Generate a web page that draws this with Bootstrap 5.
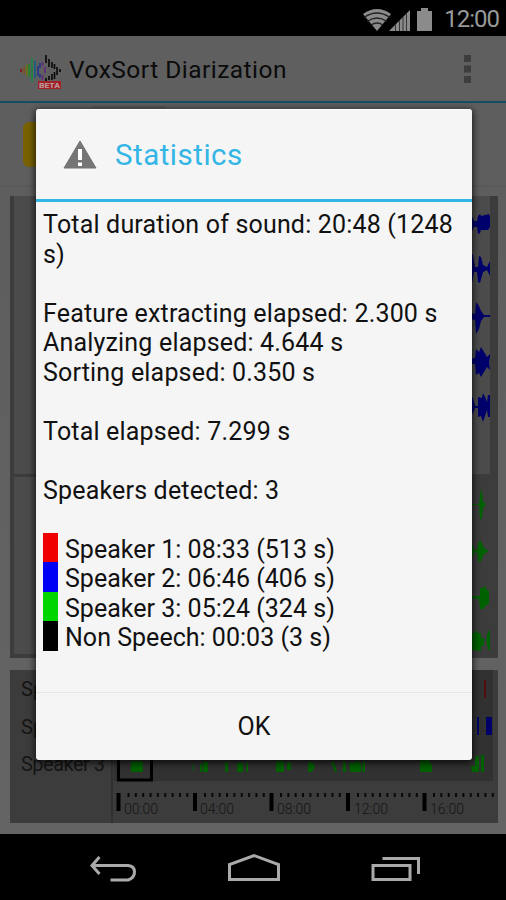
<!DOCTYPE html>
<html lang="en">
<head>
<meta charset="utf-8">
<meta name="viewport" content="width=device-width, initial-scale=1">
<title>VoxSort Diarization</title>
<link href="https://cdn.jsdelivr.net/npm/bootstrap@5.3.0/dist/css/bootstrap.min.css" rel="stylesheet">
<style>
body{font-family:Roboto,"Liberation Sans",sans-serif;background:#000}
.phone{width:506px;height:900px}
.status{height:36px;background:#000;color:#999;font-size:24px;line-height:36px;padding:1px 8px 0 0}
.clock{letter-spacing:-1px;margin-left:9px;margin-right:-1px}
.appbar{height:67px;background:#5f5f5f;border-bottom:2px solid #144e66;padding:0 0 0 18px;color:#0b0b0b}
.appname{font-size:24.5px;line-height:66px;letter-spacing:.47px;margin-left:6px;padding-top:3px}
.stage{height:731px;background:linear-gradient(#5d5d5d,#646464)}
.soft-keys{height:66px;background:#000}
.dialog-box{left:36px;top:109px;width:436px;height:651px;background:#f5f5f5;border-radius:3px;box-shadow:0 2px 7px 1px rgba(0,0,0,.75);border-top:1px solid #fff}
.dialog-head{height:92px;border-bottom:3px solid #33b5e5;padding:0 0 0 27px}
.dialog-title{font-size:29.5px;color:#33b5e5;line-height:92px;margin-left:18px;letter-spacing:.5px}
.stats{font-size:25px;line-height:29.5px;height:490px;padding:8px 7px 0;color:#111;letter-spacing:.18px}
.speaker-line{letter-spacing:.02px}
.swatch{width:15px;height:29.5px;margin-right:7px;position:relative;top:-2px}
.ok-button{border-top:1px solid #e6e6e6;font-size:25px;color:#111;height:69px}
</style>
</head>
<body>
<main class="phone position-relative overflow-hidden">
  <div class="status d-flex justify-content-end align-items-center">
    <svg width="74" height="26" viewBox="0 0 74 26" fill="#8b8b8b">
      <path d="M2 8Q16-2 30 8L16 25Z"/>
      <path d="M3 11.5Q16 2.5 29 11.5M6 15.5Q16 8.5 26 15.5M10 19Q16 15 22 19" fill="none" stroke="#222" stroke-width="1.3"/>
      <path d="M28 25L49 4V25Z"/><path d="M34.5 18v7M38.500 14v11M42 11v14M45.500 8v17" stroke="#333" stroke-width="1"/>
      <path d="M56 5h4V2h7v3h4v20H56Z"/>
    </svg>
    <span class="clock">12:00</span>
  </div>
  <header class="appbar d-flex align-items-center">
    <svg width="45" height="46" viewBox="0 0 45 46" fill="none" stroke-width="1.6">
      <path d="M3 23v3" stroke="#811014"/><path d="M6 21v7" stroke="#8b4a13"/><path d="M8.700 18.500v11" stroke="#6d7413"/><path d="M11 18v13" stroke="#28802c"/><path d="M14 12v24" stroke="#188642"/><path d="M17 15v17" stroke="#135f86"/><path d="M20 20v10M22 17v5M22 28v4" stroke="#24348a"/>
      <path d="M24.500 16v4M24.500 29v5M27 21v6" stroke="#652a83"/>
      <path d="M28 9v8M31 13v8M34 16v6M36.500 18v5M39 21v8M42 23v3M36.500 26v7M34 28v6M31 30v4M28 32v3" stroke="#080808"/>
      <path d="M20 35h23v8H20Z" fill="#a42026"/><text x="21" y="42" font-size="8" font-weight="700" fill="#b9a0a0" stroke="none" textLength="21" lengthAdjust="spacingAndGlyphs">BETA</text>
    </svg>
    <h1 class="appname mb-0 fw-normal">VoxSort Diarization</h1>
    <svg class="ms-auto" width="42" height="30" viewBox="0 0 42 30" fill="#3d3d3d"><path d="M0 1h7v7H0zM0 11.500h7v7H0zM0 22h7v7H0z"/></svg>
  </header>
  <section class="stage">
    <svg width="506" height="731" viewBox="0 103 506 731" font-family="Roboto, sans-serif">
      <path d="M0 103H506V186H0Z" fill="#5e5e5e"/><path d="M0 186H506" stroke="#555"/>
      <path d="M92 107h74" stroke="#4c4c4c"/>
      <rect x="23" y="122" width="60" height="45" rx="6" fill="#776100"/>
      <path d="M10 196H498V658H10Z" fill="#3c3c3c"/><path d="M14 196H490V474H14ZM14 477H60V654H14Z" fill="#4b4b4b"/>
      <path d="M14 658H498V670H14Z" fill="#626262"/>
      <path d="M10 670H498V823H10Z" fill="#3c3c3c"/><path d="M114 670H493V781H114Z" fill="#313131"/><path d="M112 670V823" stroke="#303030" stroke-width="2"/>
      <g fill="#00006c">
        <path d="M470 216l3 2 1 3h3l1-5 2-2 1 2 8-2 1 3v10l-2 3-7 0-1 3-2 1-1-7h-3l-2 4h-2Z"/>
        <path d="M470 252l3 3 2 12h3l1-11 2 1 2 8 4 2 3-6v15l-3-6-4 2-3 11-2-1-1-10h-3l-2 11-2 1Z"/>
        <path d="M470 313l5 1 1-12 3 4 2 5 3 4 6 0v2h-6l-3 4-2 8-3 5-1-14-5-1Z"/>
        <path d="M470 359l5-1 1-9 3 3 2-5 3 5 3 5 3-3v4l-1 4 1 8-3-3-3 5-3 5-2-4-3 2-1-11h-5Z"/>
        <path d="M470 394l3 4 2 8h3v-9l4 1 1-5 2 4 2 5 1-7h2v22h-2l-1-7-2 6-2 6-2-6-3 1v-9h-3l-2 5-3 3Z"/>
      </g>
      <g fill="#006100">
        <path d="M470 504h9l2-15 1 2 1 11 3 2-3 4-1 10-2 2-1-15h-9Z"/>
        <path d="M470 542l3 3 1 5h3l2-9 2 0 3 7 5 3-5 3-4 9-2-3-1-8-3 1-2 6h-2Z"/>
        <path d="M470 596h10v-8l3 0 2-3 1 4 3 2v13l-4 2-1 3-4 0-1-10-9-1Z"/>
        <path d="M470 633l4 0 1-3 3 3 3 0v5h3v8h-3v5l-8-1-3 1ZM486 640l2-9h2v19h-2Z"/>
        <path d="M131 761h12v11h-12ZM193 764h1v7h-1ZM200 764h2v8h-2ZM203 762h5v10h-5ZM225 762h3v10h-3ZM237 763h6v9h-6ZM246 762h2v10h-2ZM276 761h8v11h-8ZM287 762h4v8h-4ZM308 762h4l3 4-3 6h-4ZM331 762h3l3 10h-2ZM343 762h3v10h-3ZM349 763l7-1 1-2 4 4v8h-11ZM362 762h3v10h-3ZM420 760h10v4h2v8h-12ZM471 766h4v-9l4-2v17h-7ZM481 755h3v17h-3Z"/>
      </g>
      <path d="M485 680V698" stroke="#620000" stroke-width="1.500"/>
      <path d="M477 717h2v18h-2ZM486 717h6v18h-6Z" fill="#000068"/>
      <g font-size="20" fill="#151515"><text x="21" y="696">Speaker 1</text><text x="21" y="734">Speaker 2</text><text x="21" y="771" textLength="84">Speaker 3</text></g>
      <rect x="118.500" y="745" width="33" height="35" fill="none" stroke="#000" stroke-width="3"/>
      <path d="M127.500 795H194M204 795H270M280 795H347M357 795H423M433 795H494" stroke="#090909" stroke-width="4" stroke-dasharray="2 5.350"/>
      <path d="M118.500 793V811M195 793V811M271.500 793V811M348 793V811M424.500 793V811" stroke="#000" stroke-width="4"/>
      <g font-size="14" font-weight="300" fill="#151515"><text x="124" y="814" textLength="34">00:00</text><text x="200" y="814" textLength="34">04:00</text><text x="277" y="814" textLength="34">08:00</text><text x="354" y="814" textLength="34">12:00</text><text x="430" y="814" textLength="34">16:00</text></g>
    </svg>
  </section>
  <nav class="soft-keys d-flex">
    <svg width="506" height="66" viewBox="0 834 506 66" fill="none" stroke="#aaa" stroke-width="3">
      <path d="M99.500 857L92 865.500L99.500 874M92 865.500H128Q134.500 866 134.500 872T128 880H110.500"/>
      <path d="M229.500 879.500V864.500L254 855.500L278.500 864.500V879.500Z"/>
      <path d="M373 865.500H410V879.500H373ZM382.500 858.500H418.500V874"/>
    </svg>
  </nav>
  <section class="dialog-box position-absolute" role="dialog">
    <div class="dialog-head d-flex align-items-center">
      <svg width="34" height="30" viewBox="0 0 34 30"><path d="M17 1L33 28H1Z" fill="#757575" stroke="#757575" stroke-linejoin="round"/><path d="M15 9h4v11h-4ZM15 22.500h4v3.500h-4Z" fill="#fff"/></svg>
      <h2 class="dialog-title mb-0 fw-normal">Statistics</h2>
    </div>
    <div class="stats">
      <div>Total duration of sound: 20:48 (1248 s)</div><br>
      <div>Feature extracting elapsed: 2.300 s</div>
      <div>Analyzing elapsed: 4.644 s</div>
      <div>Sorting elapsed: 0.350 s</div><br>
      <div>Total elapsed: 7.299 s</div><br>
      <div>Speakers detected: 3</div><br>
      <div class="speaker-line d-flex"><span class="swatch" style="background:#f00000"></span>Speaker 1: 08:33 (513 s)</div>
      <div class="speaker-line d-flex"><span class="swatch" style="background:#0000f5"></span>Speaker 2: 06:46 (406 s)</div>
      <div class="speaker-line d-flex"><span class="swatch" style="background:#00d500"></span>Speaker 3: 05:24 (324 s)</div>
      <div class="speaker-line d-flex"><span class="swatch" style="background:#000"></span>Non Speech: 00:03 (3 s)</div>
    </div>
    <div class="ok-button d-flex justify-content-center align-items-center">OK</div>
  </section>
</main>
<script src="https://cdn.jsdelivr.net/npm/bootstrap@5.3.0/dist/js/bootstrap.bundle.min.js"></script>
</body>
</html>
